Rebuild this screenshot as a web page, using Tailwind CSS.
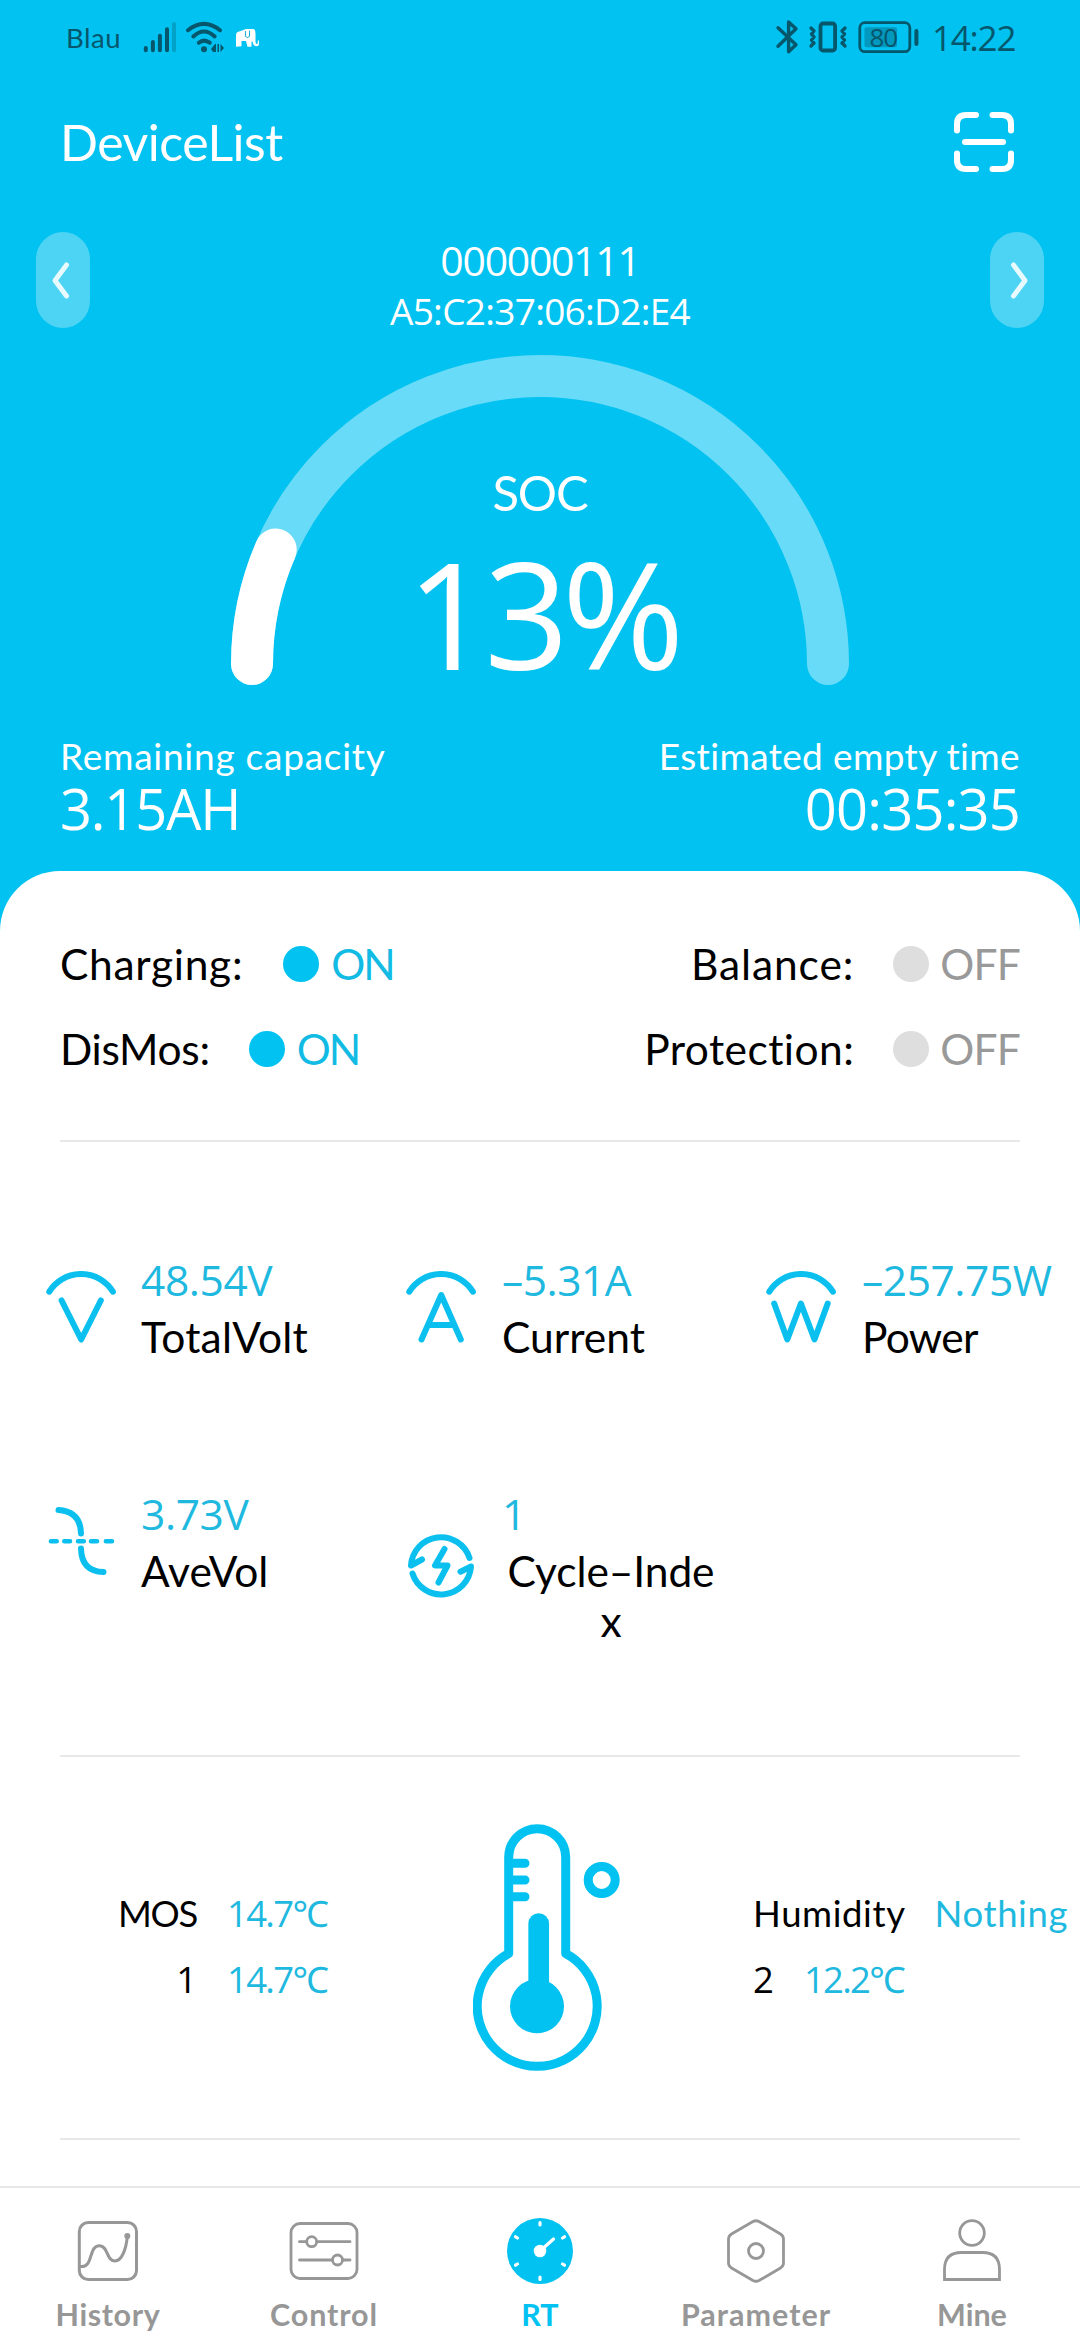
<!DOCTYPE html>
<html lang="en">
<head>
<meta charset="utf-8">
<title>Battery monitor</title>
<script src="https://cdn.jsdelivr.net/npm/@tailwindcss/browser@4"></script>
</head>
<body class="h-[2340px] w-[1080px] overflow-hidden bg-white font-[Lato,'Noto_Sans',sans-serif] text-black">
<div class="flex h-[2340px] w-[1080px] flex-col">
  <div class="flex h-[871px] shrink-0 flex-col bg-[#01c2f0] text-white">
    <!-- Status bar -->
    <div class="flex h-[76px] items-center justify-between pr-[64px] pl-[66px] text-[#06566c]">
      <div class="flex items-center">
        <span class="w-[77px] text-[27.5px] leading-[38px] tracking-[0.5px]">Blau</span>
        <svg class="h-[76px] w-[120px]" viewBox="143 0 120 76" fill="none" stroke="currentColor" stroke-width="4" stroke-linecap="round">
          <path d="M145.8 50.3V48M152.9 50.3V42M159.9 50.3V35.7M167 50.3V29.3"/>
          <path d="M174 50.3V24" opacity=".3"/>
          <path d="M188 30.2Q204 17.500 220 30.200M193.300 36.500Q204 26.500 214.700 36.500M198.800 42.700Q204 38.500 209.700 42.700"/>
          <circle cx="204" cy="49.300" r="3" fill="currentColor" stroke="none"/>
          <path d="M211 49l4-5h1v8h-3zM217.500 44h1.500v8h-1.500zM220.500 52v-8l3.500 4z" fill="currentColor" stroke="none"/>
          <path d="M236 46.700V35Q236 32 239 31.500L243.500 30Q245 28.700 248 29H254Q255.500 30 255.500 34V41Q255.500 44 257 44Q258 44 257.700 40.500H259V44Q259 46.300 256.500 46.300Q253 46 252.500 41.500H251.500V46.700H247.500L246 41H241.500V46.300Z" fill="#fff" stroke="none"/>
          <path d="M245.500 31.500V36.500Q247.500 38.500 249.500 36.500V31" stroke="#01a6d0" stroke-width="0.9"/>
        </svg>
      </div>
      <div class="flex items-center">
        <svg class="h-[76px] w-[155px]" viewBox="775 0 155 76" fill="none" stroke="currentColor" stroke-width="3.400" stroke-linecap="round" stroke-linejoin="round">
          <path d="M778 27.800L796 44.700L788.600 51.700V22L796 28.800L778 46.200"/>
          <rect x="820.500" y="23.500" width="14.600" height="27" rx="2.500" stroke-width="3.800"/>
          <path d="M811 28l3 3-2.500 3 2.500 3-2.500 3 2.500 3-3 3M845 28l-3 3 2.500 3-2.500 3 2.500 3-2.500 3 3 3"/>
          <rect x="859.800" y="22.700" width="50" height="29" rx="5" stroke-width="2.800"/>
          <rect x="864.500" y="27.300" width="32.500" height="20" rx="2" fill="#0398bd" stroke="none"/>
          <path d="M916.400 31v13" stroke-width="4"/>
          <text x="869.500" y="46.800" class="font-['Open_Sans',sans-serif] text-[26px] tracking-[-1px]" fill="currentColor" stroke="none">80</text>
        </svg>
        <span class="w-[86px] pl-[2px] font-['Open_Sans',sans-serif] text-[35px] leading-[48px] tracking-[-1.2px] whitespace-nowrap">14:22</span>
      </div>
    </div>
    <!-- Title bar -->
    <div class="flex h-[131px] items-center justify-between pr-[66px] pl-[60px]">
      <h1 class="text-[50px] leading-none tracking-[-0.5px]">DeviceList</h1>
      <svg class="size-[60px]" viewBox="0 0 60 60" fill="none" stroke="currentColor" stroke-width="6" stroke-linecap="round">
        <path d="M3 18.500V12Q3 3 12 3H22M38.500 3H48Q57 3 57 12V18.500M57 41.500V48Q57 57 48 57H38.500M22 57H12Q3 57 3 48V41.500M11 30H49"/>
      </svg>
    </div>
    <!-- Device switcher -->
    <div class="flex h-[148px] items-start justify-between px-9 pt-[25px] font-['Open_Sans',sans-serif]">
      <button class="flex h-24 w-[54px] items-center justify-center rounded-full bg-white/30">
        <svg class="h-[40px] w-[24px]" viewBox="0 0 24 40" fill="none" stroke="#e6faff" stroke-width="5" stroke-linecap="round" stroke-linejoin="round"><path d="M15.500 5L4 20.500L15.500 36"/></svg>
      </button>
      <div class="flex flex-col items-center pt-[3px] whitespace-nowrap">
        <p class="text-[41px] leading-[50px] tracking-[-1.300px]">000000111</p>
        <p class="text-[37px] leading-[52px] tracking-[-0.700px]">A5:C2:37:06:D2:E4</p>
      </div>
      <button class="flex h-24 w-[54px] items-center justify-center rounded-full bg-white/30">
        <svg class="h-[40px] w-[24px]" viewBox="0 0 24 40" fill="none" stroke="#e6faff" stroke-width="5" stroke-linecap="round" stroke-linejoin="round"><path d="M8.500 5L20 20.500L8.500 36"/></svg>
      </button>
    </div>
    <!-- State of charge gauge -->
    <div class="grid h-[381px] justify-items-center">
      <svg class="col-start-1 row-start-1 h-[331px] w-[620px]" viewBox="230 355 620 331" fill="none" stroke="#fff" stroke-width="42" stroke-linecap="round">
        <path d="M252 664A288 288 0 0 1 828 664" stroke="#67dbf7"/>
        <path d="M252 664A288 288 0 0 1 275.700 549.600"/>
      </svg>
      <div class="col-start-1 row-start-1 flex flex-col items-center pt-[107px]">
        <span class="text-[49px] leading-[60px] tracking-[-1.100px]">SOC</span>
        <span class="pl-1 font-['Open_Sans',sans-serif] text-[148px] leading-[181px] tracking-[-6.900px]">13%</span>
      </div>
    </div>
    <!-- Capacity and time left -->
    <div class="flex justify-between px-[60px] whitespace-nowrap">
      <div>
        <p class="text-[37px] leading-10 tracking-[0.750px]">Remaining capacity</p>
        <p class="font-['Open_Sans',sans-serif] text-[56px] leading-[65px] tracking-[-1.200px]">3.15AH</p>
      </div>
      <div class="text-right">
        <p class="text-[37px] leading-10 tracking-[0.350px]">Estimated empty time</p>
        <p class="font-['Open_Sans',sans-serif] text-[56px] leading-[65px] tracking-[-0.800px]">00:35:35</p>
      </div>
    </div>
  </div>

  <main class="flex h-[1315px] shrink-0 flex-col bg-[#01c2f0]">
    <div class="flex h-full flex-col rounded-t-[60px] bg-white pt-[50px] whitespace-nowrap">
      <!-- Switch states -->
      <div class="mx-[60px] h-[219px] text-[42.500px] leading-[86px]">
        <div class="flex h-[85px] items-center justify-between">
          <div class="flex items-center"><span class="tracking-[0.700px]">Charging:</span><i class="mr-[12px] ml-[40px] size-9 rounded-full bg-[#01c2f0]"></i><span class="tracking-[-2px] text-[#12bbe3]">ON</span></div>
          <div class="flex items-center"><span class="tracking-[0.900px]">Balance:</span><i class="mr-[11px] ml-[39px] size-9 rounded-full bg-[#dedede]"></i><span class="tracking-[-0.800px] text-[#999]">OFF</span></div>
        </div>
        <div class="flex h-[85px] items-center justify-between">
          <div class="flex items-center"><span class="tracking-[-0.300px]">DisMos:</span><i class="mr-[12px] ml-[39px] size-9 rounded-full bg-[#01c2f0]"></i><span class="tracking-[-2px] text-[#12bbe3]">ON</span></div>
          <div class="flex items-center"><span class="tracking-[0.450px]">Protection:</span><i class="mr-[11px] ml-[39px] size-9 rounded-full bg-[#dedede]"></i><span class="tracking-[-0.800px] text-[#999]">OFF</span></div>
        </div>
      </div>
      <hr class="mx-[60px] h-[2px] shrink-0 border-0 bg-[#e8e8e8]">
      <!-- Live readings -->
      <div class="grid h-[613px] shrink-0 grid-cols-[360px_360px_360px] content-start items-start gap-y-[127px] pt-[113px] text-[42.500px] leading-[50px]">
        <div class="flex items-center gap-[25px] pl-[46px]">
          <svg class="mb-[3px] h-[72px] w-[70px] shrink-0" viewBox="0 0 70 72" fill="none" stroke="#0bc0ee" stroke-width="6" stroke-linecap="round" stroke-linejoin="round"><path d="M3.300 20.700A37.400 37.400 0 0 1 66.900 20.700M15.600 29.500L35.200 68.500L54.800 29.500"/></svg>
          <div><p class="font-['Open_Sans',sans-serif] tracking-[-0.400px] text-[#1fb9e0]">48.54V</p><p class="mt-[7px] tracking-[0.250px]">TotalVolt</p></div>
        </div>
        <div class="flex items-center gap-[26px] pl-[46px]">
          <svg class="mb-[3px] h-[72px] w-[70px] shrink-0" viewBox="0 0 70 72" fill="none" stroke="#0bc0ee" stroke-width="6" stroke-linecap="round" stroke-linejoin="round"><path d="M3.300 20.700A37.400 37.400 0 0 1 66.900 20.700M15.500 68.500L35.200 24L54.800 68.500M23 54H47.500"/></svg>
          <div><p class="font-['Open_Sans',sans-serif] tracking-[-0.500px] text-[#1fb9e0]">–5.31A</p><p class="mt-[7px]">Current</p></div>
        </div>
        <div class="flex items-center gap-[26px] pl-[46px]">
          <svg class="mb-[3px] h-[72px] w-[70px] shrink-0" viewBox="0 0 70 72" fill="none" stroke="#0bc0ee" stroke-width="6" stroke-linecap="round" stroke-linejoin="round"><path d="M3.300 20.700A37.400 37.400 0 0 1 66.900 20.700M8.200 32.500L21.300 68.500L34.900 32.500L48.500 68.500L61.700 32.500"/></svg>
          <div><p class="font-['Open_Sans',sans-serif] tracking-[-0.450px] text-[#1fb9e0]">–257.75W</p><p class="mt-[7px] tracking-[-0.700px]">Power</p></div>
        </div>
        <div class="flex items-center gap-[25px] pl-[46px]">
          <svg class="mb-[3px] h-[68px] w-[70px] shrink-0" viewBox="0 0 70 68" fill="none" stroke="#0bc0ee" stroke-width="6" stroke-linecap="round"><path d="M12.500 3Q34.500 4.500 35 26.500M35 41.500Q35.500 64.500 57.500 65"/><path d="M4.900 34.300H10.700M18.300 34.300H24M32 34.300H37.800M45 34.300H51M59.900 34.300H66" stroke-width="4.600"/></svg>
          <div><p class="font-['Open_Sans',sans-serif] tracking-[-0.400px] text-[#1fb9e0]">3.73V</p><p class="mt-[7px]">AveVol</p></div>
        </div>
        <div class="flex items-center gap-[26px] pl-[46px]">
          <svg class="mb-[4px] size-[70px] shrink-0" viewBox="0 0 70 70" fill="none" stroke="#0bc0ee" stroke-width="6" stroke-linecap="round" stroke-linejoin="round"><path d="M63.500 27A30 30 0 0 0 5 34.500L16 28.500M6.500 42.500A30 30 0 0 0 65 35.500L54.500 40.700M38.500 18L29 34.500H41.500L32.500 51.500"/></svg>
          <div class="w-[218px]"><p class="font-['Open_Sans',sans-serif] text-[#1fb9e0]">1</p><p class="mt-[7px] text-center tracking-[-0.100px]">Cycle–Inde<br>x</p></div>
        </div>
      </div>
      <hr class="mx-[60px] h-[2px] shrink-0 border-0 bg-[#e8e8e8]">
      <!-- Temperatures -->
      <div class="flex h-[381px] shrink-0 items-center text-[36.500px] leading-[66px]">
        <div class="mb-[3px] w-[473px]">
          <div class="flex"><span class="w-[197px] text-right tracking-[-1.300px]">MOS</span><span class="ml-[30px] font-['Open_Sans','Noto_Sans',sans-serif] tracking-[-1.700px] text-[#1fb9e0]">14.7℃</span></div>
          <div class="flex"><span class="w-[197px] text-right font-['Open_Sans',sans-serif]">1</span><span class="ml-[30px] font-['Open_Sans','Noto_Sans',sans-serif] tracking-[-1.700px] text-[#1fb9e0]">14.7℃</span></div>
        </div>
        <svg class="h-[247px] w-[147px] shrink-0" viewBox="0 0 147 247" fill="none" stroke="#01c2f0" stroke-width="9" stroke-linecap="round" stroke-linejoin="round">
          <path d="M35.700 129.500V33.200A28.500 28.500 0 0 1 92.700 33.200V129.500A60 60 0 1 1 35.700 129.500Z"/>
          <path d="M38 39.300H52M38 56H52M38 72.700H52"/>
          <path d="M65.700 99.500V170" stroke-width="20.700"/>
          <circle cx="64" cy="182.300" r="27" fill="#01c2f0" stroke="none"/>
          <circle cx="128.700" cy="56" r="13.500"/>
        </svg>
        <div class="mb-[3px] pl-[133px]">
          <div class="flex"><span class="tracking-[0.600px]">Humidity</span><span class="ml-[29px] tracking-[0.600px] text-[#1fb9e0]">Nothing</span></div>
          <div class="flex font-['Open_Sans','Noto_Sans',sans-serif]"><span>2</span><span class="ml-[30px] tracking-[-1.700px] text-[#1fb9e0]">12.2℃</span></div>
        </div>
      </div>
      <hr class="mx-[60px] h-[2px] shrink-0 border-0 bg-[#e8e8e8]">
    </div>
  </main>

  <!-- Tab bar -->
  <nav class="grid h-[154px] shrink-0 grid-cols-5 border-t-2 border-[#e8e8e8] bg-white pt-[28px] text-[30.500px] leading-9 font-bold text-[#979797]">
    <a class="flex flex-col items-center gap-[10px]">
      <svg class="size-[70px]" viewBox="0 0 70 70" fill="none" stroke="currentColor" stroke-width="3" stroke-linecap="round"><rect x="6.300" y="6.500" width="57.200" height="57" rx="9"/><path d="M8 50.500C21 51 15 29.700 26.500 29.700C35.500 29.700 33 45 41.700 45C49 45 53 33 54.300 21"/><circle cx="54.300" cy="20" r="3" fill="currentColor" stroke="none"/></svg>
      <span class="tracking-[0.600px]">History</span>
    </a>
    <a class="flex flex-col items-center gap-[10px]">
      <svg class="size-[70px]" viewBox="0 0 70 70" fill="none" stroke="currentColor" stroke-width="2.800" stroke-linecap="round"><rect x="2" y="7.500" width="66" height="55" rx="9"/><path d="M10.500 25.700H17.500M28 25.700H61M10.500 44H43.500M54 44H61"/><circle cx="22.700" cy="25.700" r="5"/><circle cx="48.500" cy="44" r="5"/></svg>
      <span class="tracking-[0.900px]">Control</span>
    </a>
    <a class="flex flex-col items-center gap-[10px] text-[#01c2f0]">
      <svg class="size-[70px]" viewBox="0 0 70 70" fill="none" stroke="#fff" stroke-width="3.200" stroke-linecap="round"><circle cx="35" cy="35" r="33" fill="#01c2f0" stroke="none"/><path d="M35 6.500V9M35 61V63.500M57.500 22L59.500 20.800M57.500 48L59.500 49.200M12.500 22L10.500 20.800M12.500 48L10.500 49.200M35 35L48.500 23"/><circle cx="35" cy="35" r="6.300" fill="#fff" stroke="none"/></svg>
      <span>RT</span>
    </a>
    <a class="flex flex-col items-center gap-[10px]">
      <svg class="size-[70px]" viewBox="0 0 70 70" fill="none" stroke="currentColor" stroke-width="2.800" stroke-linejoin="round"><path d="M32 5.500Q35 4 38 5.500L59.500 18Q62.500 20 62.500 23V47Q62.500 50 59.500 52L38 64.500Q35 66 32 64.500L10.500 52Q7.500 50 7.500 47V23Q7.500 20 10.500 18Z"/><circle cx="35" cy="35" r="7.500"/></svg>
      <span class="tracking-[1px]">Parameter</span>
    </a>
    <a class="flex flex-col items-center gap-[10px]">
      <svg class="size-[70px]" viewBox="0 0 70 70" fill="none" stroke="currentColor" stroke-width="2.800"><circle cx="35" cy="17" r="12.300"/><path d="M7.500 63.500V53.500Q7.500 36.500 24.500 36.500H45.500Q62.500 36.500 62.500 53.500V63.500Z"/></svg>
      <span>Mine</span>
    </a>
  </nav>
</div>
</body>
</html>
